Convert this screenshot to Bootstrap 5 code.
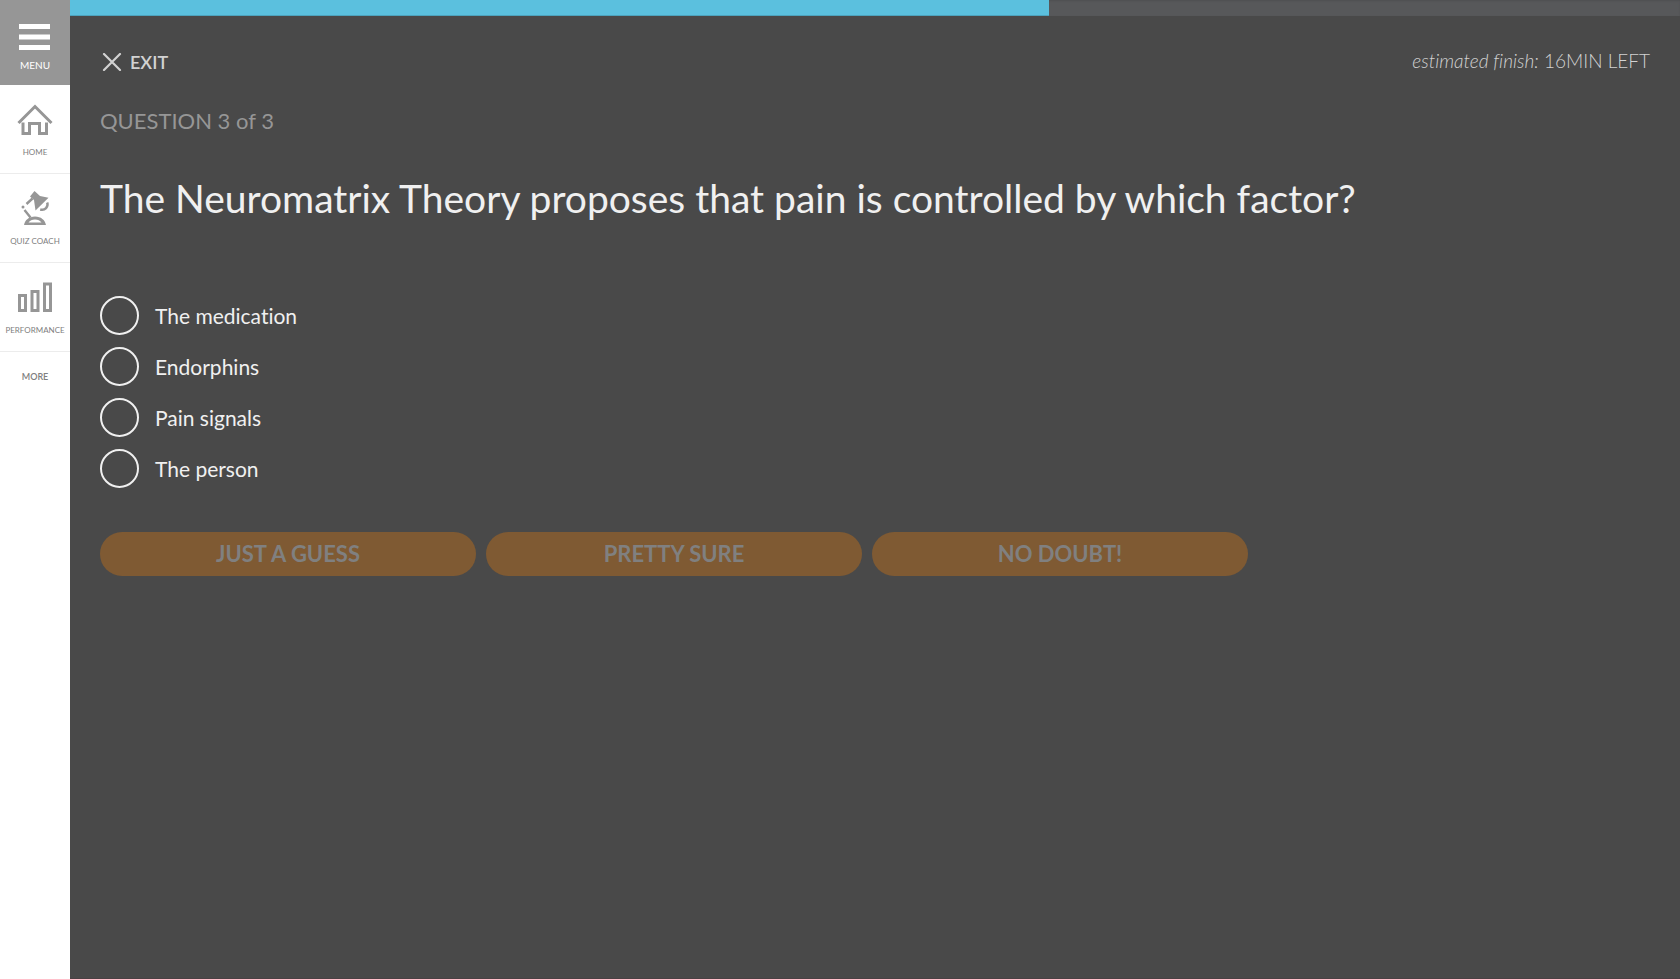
<!DOCTYPE html>
<html lang="en">
<head>
<meta charset="utf-8">
<meta name="viewport" content="width=device-width, initial-scale=1">
<title>Quiz</title>
<link href="https://cdn.jsdelivr.net/npm/bootstrap@5.3.0/dist/css/bootstrap.min.css" rel="stylesheet">
<style>
body { font-family: Lato, "Noto Sans", sans-serif; font-variant-ligatures: none; background: #494949; color: #f0f0f0; }
.side-rail { width: 70px; background: #fff; }
.rail-item { height: 89px; border: 0; border-bottom: 1px solid #ececec; color: #808080; font-size: 8px; line-height: 14px; font-weight: 400; background: transparent; }
.rail-menu { height: 85px; background: #969696; color: #fff; font-size: 10px; border: 0; }
.rail-more { height: 50px; border: 0; font-size: 9px; font-weight: 600; }
.quiz-progress { height: 16px; border-radius: 0; background: #57585a; box-shadow: inset 0 1px 2px rgba(0,0,0,.1); }
.quiz-progress .progress-bar { background: #5bc0de; box-shadow: inset 0 -1px 0 rgba(0,0,0,.15); }
.quiz-main { border-bottom: 1px solid #4a4043; }
.quiz-body { padding: 29px 30px 30px; }
.exit-link { color: #d2d2d2; font-size: 18px; line-height: 34px; font-weight: 600; }
.time-left { color: #d2d2d2; font-size: 19px; line-height: 32px; font-weight: 300; }
.question-count { color: #969696; font-size: 22px; line-height: 34px; margin: 25px 0 0; font-weight: 400; }
.question-text { font-size: 39px; line-height: 50px; margin: 35px 0 0; font-weight: 400; }
.answer-list { gap: 12px; margin-top: 73px; }
.answer-list .form-check-input { width: 39px; height: 39px; border: 2px solid #f0f0f0; background-color: transparent; margin: 0; float: none; }
.answer-list label { font-size: 21px; line-height: 39px; }
.confidence-row { gap: 10px; margin-top: 44px; max-width: 1148px; }
.confidence-row .btn, .confidence-row .btn:disabled { background: #7f5a33; border: 0; color: #808080; opacity: 1; border-radius: 22px; height: 44px; padding: 0; font-size: 22px; line-height: 44px; font-weight: 700; }
</style>
</head>
<body>
<div class="d-flex min-vh-100">
  <nav class="side-rail flex-shrink-0 d-flex flex-column" aria-label="Main">
    <button type="button" class="rail-item rail-menu d-flex flex-column align-items-center p-0 pt-4">
      <svg width="32" height="26" viewBox="0 0 32 26" fill="#fff" aria-hidden="true"><path d="M0 0h31v5H0zM0 10.500h31v5H0zM0 21h31v5H0z"/></svg>
      <span class="mt-2">MENU</span>
    </button>
    <a href="#" class="rail-item d-flex flex-column align-items-center text-decoration-none">
      <svg class="mt-3" width="36" height="36" viewBox="0 0 36 36" fill="none" stroke="#969696" stroke-width="3" aria-hidden="true"><path d="M1.500 22 18 5.500 34.500 22" /><path d="M6 21.500V32.500h6.500V22.500h10V32.500H29.500V21.500"/></svg>
      <span class="mt-2">HOME</span>
    </a>
    <a href="#" class="rail-item d-flex flex-column align-items-center text-decoration-none">
      <svg class="mt-3" width="36" height="36" viewBox="0 0 36 36" aria-hidden="true">
        <path fill="#969696" d="M17.500 1 23 6l8.500 1.700L18.500 20.500 17 10l-4-3.500z"/>
        <circle cx="6" cy="17" r="1.500" fill="#969696"/>
        <path d="M15.500 8.500 9.500 14M7.500 20l6 7.500M30.200 12.500c1.500 4-2.200 8.500-7 7" fill="none" stroke="#969696" stroke-width="2.400"/>
        <path fill="#969696" fill-rule="evenodd" d="M7 35c1-5 5-8.500 11-8.500S28 30 29 35zM11.500 32.500h13c-1.500-2-3.500-3-6.500-3s-5 1-6.500 3z"/>
      </svg>
      <span class="mt-2">QUIZ COACH</span>
    </a>
    <a href="#" class="rail-item d-flex flex-column align-items-center text-decoration-none">
      <svg class="mt-3" width="36" height="36" viewBox="0 0 36 36" fill="none" stroke="#969696" stroke-width="3" aria-hidden="true"><path d="M2.500 16.500h6v15h-6zM15 12.500h6v19h-6zM27.500 5h6v26.500h-6z"/></svg>
      <span class="mt-2">PERFORMANCE</span>
    </a>
    <a href="#" class="rail-item rail-more d-flex align-items-center justify-content-center text-decoration-none">MORE</a>
  </nav>
  <main class="quiz-main flex-grow-1">
    <div class="progress quiz-progress" role="progressbar" aria-label="Quiz progress" aria-valuenow="61" aria-valuemin="0" aria-valuemax="100"><div class="progress-bar" style="width:60.8%"></div></div>
    <div class="quiz-body">
      <div class="d-flex justify-content-between">
        <a href="#" class="exit-link d-flex align-items-center gap-2 text-decoration-none"><svg width="22" height="18" viewBox="0 0 22 18" fill="none" stroke="#d2d2d2" stroke-width="2.200" stroke-linecap="round" aria-hidden="true"><path d="M4 1 20 17M20 1 4 17"/></svg><span>EXIT</span></a>
        <div class="time-left"><em>estimated finish:</em> 16MIN LEFT</div>
      </div>
      <p class="question-count">QUESTION 3 of 3</p>
      <h1 class="question-text">The Neuromatrix Theory proposes that pain is controlled by which factor?</h1>
      <div class="answer-list d-flex flex-column">
        <div class="d-flex gap-3"><input class="form-check-input" type="radio" name="answer" id="a1"><label for="a1">The medication</label></div>
        <div class="d-flex gap-3"><input class="form-check-input" type="radio" name="answer" id="a2"><label for="a2">Endorphins</label></div>
        <div class="d-flex gap-3"><input class="form-check-input" type="radio" name="answer" id="a3"><label for="a3">Pain signals</label></div>
        <div class="d-flex gap-3"><input class="form-check-input" type="radio" name="answer" id="a4"><label for="a4">The person</label></div>
      </div>
      <div class="confidence-row d-flex">
        <button type="button" class="btn flex-fill w-100" disabled>JUST A GUESS</button>
        <button type="button" class="btn flex-fill w-100" disabled>PRETTY SURE</button>
        <button type="button" class="btn flex-fill w-100" disabled>NO DOUBT!</button>
      </div>
    </div>
  </main>
</div>
<script src="https://cdn.jsdelivr.net/npm/bootstrap@5.3.0/dist/js/bootstrap.bundle.min.js"></script>
</body>
</html>
